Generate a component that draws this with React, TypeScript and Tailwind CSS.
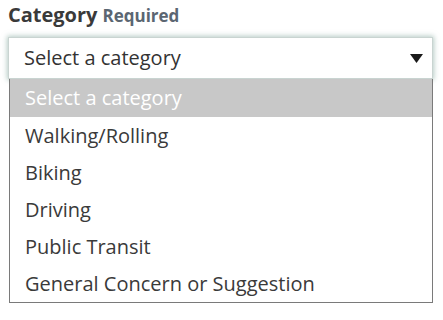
const options = [
  'Select a category',
  'Walking/Rolling',
  'Biking',
  'Driving',
  'Public Transit',
  'General Concern or Suggestion',
];

export default function App() {
  return (
    <div className="min-h-screen bg-white px-2 font-['Open_Sans',sans-serif]">
      <div className="flex items-baseline gap-[5px] leading-[30px]">
        <span className="text-[20px] font-bold text-[#3a3a3a]">Category</span>
        <span className="text-[17px] font-bold text-[#5b6672]">Required</span>
      </div>
      <div className="mt-[6px] w-[425px]">
        <div className="flex h-[42px] items-center justify-between border border-[#c9d4d1] bg-white pl-[15px] pr-[8px] shadow-[0_0_5px_1px_rgba(120,160,150,0.55)]">
          <span className="text-[20px] text-[#333]">Select a category</span>
          <svg width="13" height="9" viewBox="0 0 13 9" className="mr-[1px]">
            <path d="M0 0 H13 L6.5 9 Z" fill="#1a1a1a" />
          </svg>
        </div>
        <ul className="ml-[1px] w-[424px] border border-t-0 border-[#7a7a7a] bg-white">
          {options.map((o, i) => (
            <li
              key={o}
              className={
                i === 0
                  ? 'flex h-[38px] items-center bg-[#c8c8c8] pl-[15px] text-[20px] text-white'
                  : 'flex h-[37px] items-center pl-[15px] text-[20px] text-[#3a3a3a]'
              }
            >
              {o}
            </li>
          ))}
        </ul>
      </div>
    </div>
  );
}
